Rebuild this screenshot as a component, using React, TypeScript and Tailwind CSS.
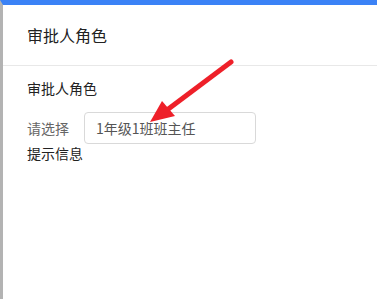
import React from "react";

export default function App() {
  return (
    <div
      className="relative w-[377px] h-[299px] bg-white border-t-[5px] border-t-[#3b82f6] border-l-[3px] border-l-[#b3b3b3] overflow-hidden"
      style={{ fontFamily: '"Noto Sans CJK SC", "Noto Sans", sans-serif' }}
    >
      <div className="h-[61px] flex items-center pl-[24px] border-b border-[#e8e8e8]">
        <span className="text-[16px] text-[#222] leading-none">审批人角色</span>
      </div>
      <div className="pl-[24px] pt-[12px]">
        <div className="text-[14px] leading-[20px] text-[#222]">审批人角色</div>
        <div className="flex items-center mt-[14px]">
          <span className="text-[14px] text-[#666] w-[57px]">请选择</span>
          <div className="w-[172px] h-[32px] border border-[#d9d9d9] rounded-[4px] flex items-center pl-[11px] text-[14px] text-[#555]">
            1年级1班班主任
          </div>
        </div>
        <div className="text-[14px] leading-[20px] text-[#222] -mt-[1px]">提示信息</div>
      </div>
      <svg
        className="absolute left-0 top-0"
        width="377"
        height="299"
        viewBox="0 -5 377 299"
        style={{ transform: "translate(-3px, 0)" }}
      >
        <line x1="231" y1="52" x2="167" y2="100" stroke="#ee2029" strokeWidth="5" strokeLinecap="round" />
        <polygon points="150,112 162,91 175,106" fill="#ee2029" />
      </svg>
    </div>
  );
}
